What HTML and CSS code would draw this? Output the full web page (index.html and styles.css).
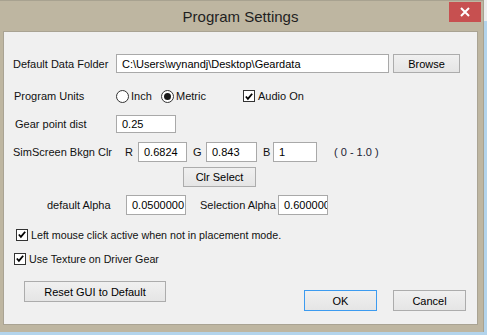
FILE: index.html
```html
<!DOCTYPE html>
<html>
<head>
<meta charset="utf-8">
<link rel="stylesheet" href="styles.css">
</head>
<body>
<div class="window">
  <div class="titlebar">
    <span class="title">Program Settings</span>
    <div class="close"><svg width="10" height="10" viewBox="0 0 10 10"><path d="M1 1 L9 9 M9 1 L1 9" stroke="#fff" stroke-width="2"/></svg></div>
  </div>
  <div class="content">
    <div class="row row1">
      <span class="lbl lbl-folder">Default Data Folder</span>
      <div class="input in-folder">C:\Users\wynandj\Desktop\Geardata</div>
      <div class="btn btn-browse">Browse</div>
    </div>
    <div class="row row2">
      <span class="lbl lbl-units">Program Units</span>
      <div class="radio r-inch"><span class="circle"></span><span class="opt">Inch</span></div>
      <div class="radio r-metric"><span class="circle on"></span><span class="opt">Metric</span></div>
      <div class="check"><span class="box"><svg width="11" height="11" viewBox="0 0 11 11"><path d="M2 5.5 L4.3 8 L9 2.5" fill="none" stroke="#000" stroke-width="2"/></svg></span><span class="opt">Audio On</span></div>
    </div>
    <div class="row row3">
      <span class="lbl lbl-gear">Gear point dist</span>
      <div class="input in-gear">0.25</div>
    </div>
    <div class="row row4">
      <span class="lbl lbl-sim">SimScreen Bkgn Clr</span>
      <span class="ch ch-r">R</span>
      <div class="input in-r">0.6824</div>
      <span class="ch ch-g">G</span>
      <div class="input in-g">0.843</div>
      <span class="ch ch-b">B</span>
      <div class="input in-b">1</div>
      <span class="range">( 0 - 1.0 )</span>
    </div>
    <div class="row row5">
      <div class="btn btn-clr">Clr Select</div>
    </div>
    <div class="row row6">
      <span class="lbl lbl-alpha">default Alpha</span>
      <div class="input in-alpha">0.0500000</div>
      <span class="lbl lbl-sel">Selection Alpha</span>
      <div class="input in-sel">0.600000</div>
    </div>
    <div class="row row7">
      <div class="check"><span class="box"><svg width="11" height="11" viewBox="0 0 11 11"><path d="M2 5.5 L4.3 8 L9 2.5" fill="none" stroke="#000" stroke-width="2"/></svg></span><span class="opt long">Left mouse click active when not in placement mode.</span></div>
    </div>
    <div class="row row8">
      <div class="check"><span class="box"><svg width="11" height="11" viewBox="0 0 11 11"><path d="M2 5.5 L4.3 8 L9 2.5" fill="none" stroke="#000" stroke-width="2"/></svg></span><span class="opt long">Use Texture on Driver Gear</span></div>
    </div>
    <div class="row row9">
      <div class="btn btn-reset">Reset GUI to Default</div>
      <div class="btn btn-ok">OK</div>
      <div class="btn btn-cancel">Cancel</div>
    </div>
  </div>
</div>
</body>
</html>
```
FILE: styles.css
```css
* { box-sizing: border-box; }
html, body { margin: 0; padding: 0; }
body {
  width: 487px;
  height: 335px;
  overflow: hidden;
  background: linear-gradient(#ecedee 0 21px, #b3d4ec 21px);
  font-family: "Liberation Sans", Arial, sans-serif;
  font-size: 11px;
  color: #111;
}
.window {
  width: 484px;
  height: 332px;
  background: #beb6a1;
  border-top: 1px solid #a8a290;
  border-right: 1px solid #a8a290;
  padding: 0 5px 7px 3px;
  display: flex;
  flex-direction: column;
}
.titlebar {
  height: 30px;
  display: flex;
  justify-content: center;
  align-items: flex-start;
  position: relative;
}
.title {
  font-size: 15px;
  color: #1f1f1f;
  margin-top: 7px;
  margin-left: 2px;
  margin-right: 2px;
}
.close {
  position: absolute;
  right: -3px;
  top: 1px;
  width: 32px;
  height: 20px;
  background: #c75050;
  display: flex;
  align-items: center;
  justify-content: center;
}
.content {
  height: 294px;
  background: #f0f0f0;
  border: 1px solid #a9a393;
  display: flex;
  flex-direction: column;
}
.row { display: flex; align-items: center; }
.lbl { flex: none; white-space: nowrap; }
.input {
  flex: none;
  background: #fff;
  border: 1px solid #a9a9a9;
  padding-left: 5px;
  white-space: nowrap;
  overflow: hidden;
  display: flex;
  align-items: center;
  font-size: 11px;
  color: #000;
}
.btn {
  flex: none;
  border: 1px solid #acacac;
  background: linear-gradient(#f0f0f0, #e5e5e5);
  display: flex;
  align-items: center;
  justify-content: center;
  color: #000;
}
.row1 { margin-top: 22px; height: 19px; }
.lbl-folder { margin-left: 9px; width: 103px; }
.in-folder { width: 273px; height: 19px; }
.btn-browse { margin-left: 4px; width: 67px; height: 19px; }

.row2 { margin-top: 16px; height: 14px; }
.lbl-units { margin-left: 10px; width: 102px; }
.radio { display: flex; align-items: center; flex: none; }
.r-inch { width: 45px; }
.r-metric { width: 82px; }
.circle {
  width: 13px; height: 13px;
  border: 1px solid #333;
  border-radius: 50%;
  background: #fff;
  display: flex; align-items: center; justify-content: center;
  margin-right: 2px;
}
.circle.on::after {
  content: "";
  width: 7px; height: 7px;
  border-radius: 50%;
  background: #1a1a1a;
}
.check { display: flex; align-items: center; flex: none; }
.box {
  width: 12px; height: 12px;
  border: 1px solid #333;
  background: #fff;
  display: flex; align-items: center; justify-content: center;
  margin-right: 3px;
}
.box svg { display: block; }
.long { font-size: 10.7px; }

.row3 { margin-top: 12px; height: 18px; }
.lbl-gear { margin-left: 11px; width: 101px; }
.in-gear { width: 60px; height: 18px; }

.row4 { margin-top: 9px; height: 20px; }
.lbl-sim { margin-left: 9px; width: 112px; }
.ch { flex: none; }
.ch-r { width: 13px; }
.in-r { width: 49px; height: 20px; }
.ch-g { margin-left: 6px; width: 13px; }
.in-g { width: 51px; height: 20px; }
.ch-b { margin-left: 6px; width: 10px; }
.in-b { width: 44px; height: 20px; }
.range { margin-left: 17px; color: #1c2232; }

.row5 { margin-top: 5px; height: 20px; }
.btn-clr { margin-left: 179px; width: 73px; height: 20px; }

.row6 { margin-top: 8px; height: 20px; }
.lbl-alpha { margin-left: 43px; width: 79px; }
.in-alpha { width: 60px; height: 20px; }
.lbl-sel { margin-left: 14px; width: 78px; }
.in-sel { width: 50px; height: 20px; }

.row7 { margin-top: 13px; height: 13px; }
.row7 .check { margin-left: 12px; }
.row8 { margin-top: 11px; height: 13px; }
.row8 .check { margin-left: 10px; }

.row9 { margin-top: 16px; align-items: flex-start; }
.btn-reset { margin-left: 20px; width: 142px; height: 21px; }
.btn-ok { margin-left: 138px; margin-top: 9px; width: 73px; height: 21px; border-color: #3c9bf0; }
.btn-cancel { margin-left: 16px; margin-top: 9px; width: 73px; height: 21px; }
```
